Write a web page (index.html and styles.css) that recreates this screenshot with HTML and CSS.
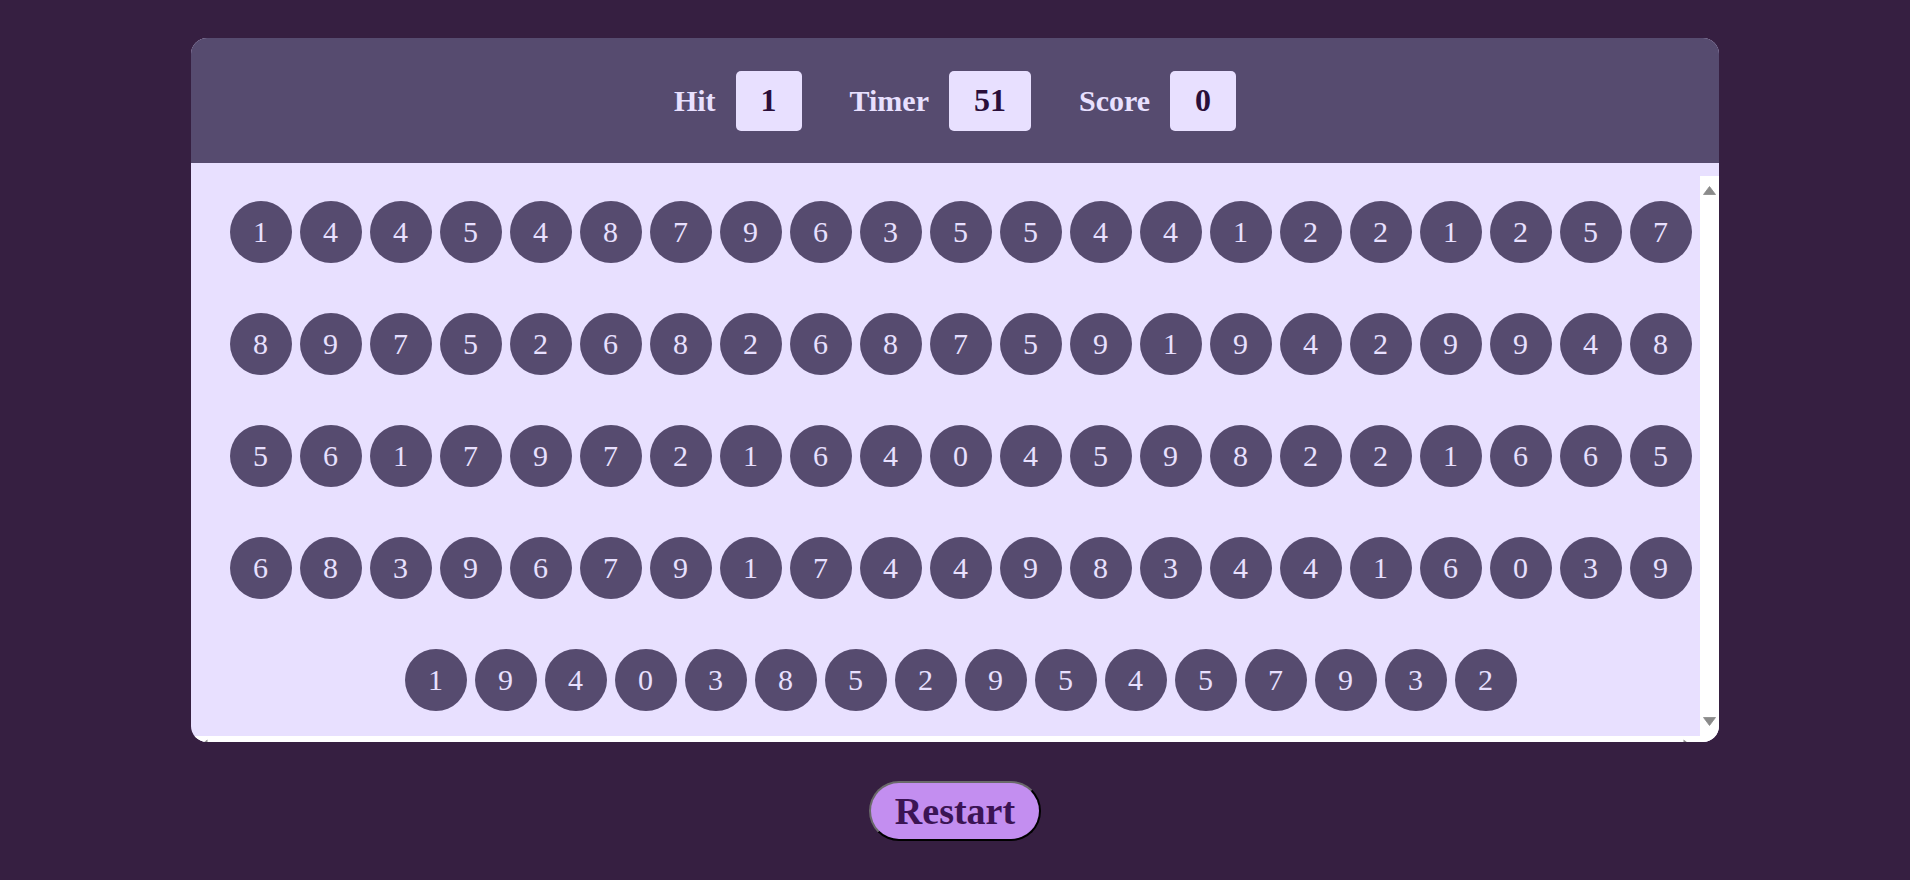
FILE: index.html
```html
<!DOCTYPE html>
<html lang="en">
<head>
<meta charset="utf-8">
<title>Bubble Game</title>
<link rel="stylesheet" href="styles.css">
</head>
<body>
<div class="board">
  <div class="panel">
    <div class="stat"><span class="label">Hit</span><span class="value">1</span></div>
    <div class="stat"><span class="label">Timer</span><span class="value">51</span></div>
    <div class="stat"><span class="label">Score</span><span class="value">0</span></div>
  </div>
  <div class="game">
    <div class="bubbles">
      <div class="bubble">1</div><div class="bubble">4</div><div class="bubble">4</div><div class="bubble">5</div><div class="bubble">4</div><div class="bubble">8</div><div class="bubble">7</div><div class="bubble">9</div><div class="bubble">6</div><div class="bubble">3</div><div class="bubble">5</div><div class="bubble">5</div><div class="bubble">4</div><div class="bubble">4</div><div class="bubble">1</div><div class="bubble">2</div><div class="bubble">2</div><div class="bubble">1</div><div class="bubble">2</div><div class="bubble">5</div><div class="bubble">7</div>
      <div class="bubble">8</div><div class="bubble">9</div><div class="bubble">7</div><div class="bubble">5</div><div class="bubble">2</div><div class="bubble">6</div><div class="bubble">8</div><div class="bubble">2</div><div class="bubble">6</div><div class="bubble">8</div><div class="bubble">7</div><div class="bubble">5</div><div class="bubble">9</div><div class="bubble">1</div><div class="bubble">9</div><div class="bubble">4</div><div class="bubble">2</div><div class="bubble">9</div><div class="bubble">9</div><div class="bubble">4</div><div class="bubble">8</div>
      <div class="bubble">5</div><div class="bubble">6</div><div class="bubble">1</div><div class="bubble">7</div><div class="bubble">9</div><div class="bubble">7</div><div class="bubble">2</div><div class="bubble">1</div><div class="bubble">6</div><div class="bubble">4</div><div class="bubble">0</div><div class="bubble">4</div><div class="bubble">5</div><div class="bubble">9</div><div class="bubble">8</div><div class="bubble">2</div><div class="bubble">2</div><div class="bubble">1</div><div class="bubble">6</div><div class="bubble">6</div><div class="bubble">5</div>
      <div class="bubble">6</div><div class="bubble">8</div><div class="bubble">3</div><div class="bubble">9</div><div class="bubble">6</div><div class="bubble">7</div><div class="bubble">9</div><div class="bubble">1</div><div class="bubble">7</div><div class="bubble">4</div><div class="bubble">4</div><div class="bubble">9</div><div class="bubble">8</div><div class="bubble">3</div><div class="bubble">4</div><div class="bubble">4</div><div class="bubble">1</div><div class="bubble">6</div><div class="bubble">0</div><div class="bubble">3</div><div class="bubble">9</div>
      <div class="bubble">1</div><div class="bubble">9</div><div class="bubble">4</div><div class="bubble">0</div><div class="bubble">3</div><div class="bubble">8</div><div class="bubble">5</div><div class="bubble">2</div><div class="bubble">9</div><div class="bubble">5</div><div class="bubble">4</div><div class="bubble">5</div><div class="bubble">7</div><div class="bubble">9</div><div class="bubble">3</div><div class="bubble">2</div>
    </div>
    <div class="vbar">
      <svg class="arrow" width="13" height="9" viewBox="0 0 13 9"><path d="M6.5 0.5 L12.5 8.5 L0.5 8.5 Z" fill="#8a8a8a" stroke="#8a8a8a" stroke-width="0.8" stroke-linejoin="round"/></svg>
      <svg class="arrow" width="13" height="9" viewBox="0 0 13 9"><path d="M0.5 0.5 L12.5 0.5 L6.5 8.5 Z" fill="#8a8a8a" stroke="#8a8a8a" stroke-width="0.8" stroke-linejoin="round"/></svg>
    </div>
    <div class="hbar">
      <svg class="arrow" width="9" height="13" viewBox="0 0 9 13"><path d="M8.5 0.5 L8.5 12.5 L0.5 6.5 Z" fill="#8a8a8a"/></svg>
      <svg class="arrow" width="9" height="13" viewBox="0 0 9 13"><path d="M0.5 0.5 L8.5 6.5 L0.5 12.5 Z" fill="#8a8a8a"/></svg>
    </div>
    <div class="corner"></div>
  </div>
</div>
<div class="actions">
  <button class="restart" type="button">Restart</button>
</div>
</body>
</html>
```

FILE: styles.css
```css
* { box-sizing: border-box; }

html, body {
  margin: 0;
  padding: 0;
}

body {
  background: #361f41;
  font-family: "Liberation Serif", "Times New Roman", serif;
  padding-top: 38px;
}

.board {
  width: 80%;
  height: 704px;
  margin: 0 auto;
  background: #e8e0ff;
  border-radius: 16px;
  overflow: hidden;
}

.panel {
  height: 125px;
  background: #564b6f;
  display: flex;
  align-items: center;
  justify-content: center;
  gap: 48px;
}

.stat {
  display: flex;
  align-items: center;
  gap: 20px;
}

.label {
  color: #e8e0ff;
  font-weight: bold;
  font-size: 30px;
}

.value {
  height: 60px;
  padding: 0 25px;
  display: flex;
  align-items: center;
  background: #e8e0ff;
  color: #2a0f3a;
  font-weight: bold;
  font-size: 32px;
  border-radius: 5px;
}

.game {
  margin-top: 13px;
  display: grid;
  grid-template-columns: 1fr 19px;
  grid-template-rows: 560px 19px;
}

.bubbles {
  padding-left: 30px;
  display: flex;
  flex-wrap: wrap;
  justify-content: center;
  align-content: space-around;
  column-gap: 8px;
}

.bubble {
  width: 62px;
  height: 62px;
  border-radius: 50%;
  background: #564b6f;
  color: #e8e0ff;
  font-size: 30px;
  display: flex;
  align-items: center;
  justify-content: center;
}

.vbar {
  background: #ffffff;
  display: flex;
  flex-direction: column;
  align-items: center;
  justify-content: space-between;
  padding: 10px 0;
}

.hbar {
  background: #ffffff;
  display: flex;
  align-items: center;
  justify-content: space-between;
  padding: 0 8px 0 8px;
}

.corner {
  background: #ffffff;
}

.arrow {
  display: block;
}

.actions {
  display: flex;
  justify-content: center;
  margin-top: 39px;
}

.restart {
  font-family: "Liberation Serif", "Times New Roman", serif;
  font-size: 38px;
  font-weight: bold;
  color: #3b1454;
  background: #c38ef0;
  padding: 6px 24px;
  border: 2px solid;
  border-color: #6a6a6a #000000 #000000 #6a6a6a;
  border-radius: 30px;
  cursor: pointer;
}
```
